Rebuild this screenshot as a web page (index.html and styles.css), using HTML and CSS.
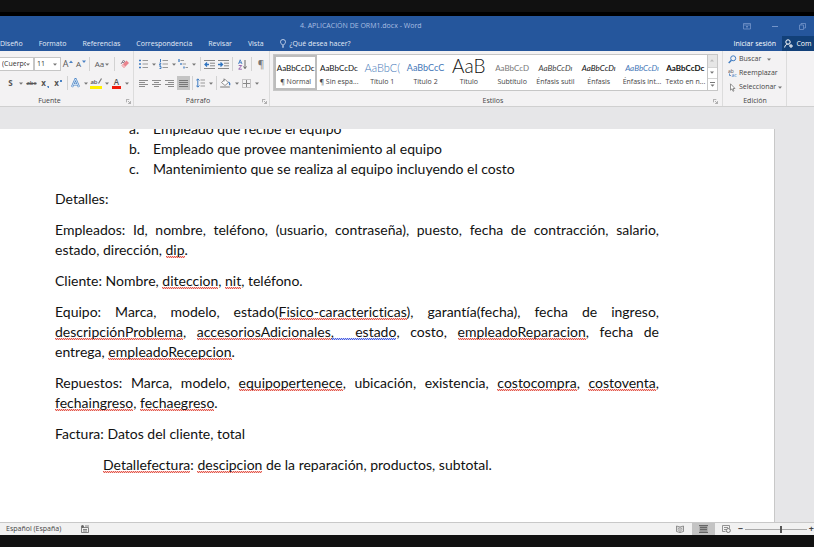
FILE: index.html
```html
<!DOCTYPE html>
<html lang="es">
<head>
<meta charset="utf-8">
<title>4. APLICACIÓN DE ORM1.docx - Word</title>
<link rel="stylesheet" href="styles.css">
</head>
<body>
<svg class="defs" aria-hidden="true">
  <symbol id="chev" viewBox="0 0 4 3"><path d="M0 .5h4L2 2.7z" fill="#777"/></symbol>
  <symbol id="launch" viewBox="0 0 6 6"><path d="M.5 4V.5H4M2.5 2.5l2.5 2.5M5.5 2.5v3h-3" fill="none" stroke="#888" stroke-width=".8"/></symbol>
</svg>
<header class="top">
  <div class="title-row">
    <h1>4. APLICACIÓN DE ORM1.docx - Word</h1>
    <div class="win">
      <button aria-label="Opciones de cinta"><svg width="8" height="7" viewBox="0 0 8 7"><path d="M.5.5h7v5.5h-7zM.5 2h7M4 5.500V3M3 4l1-1 1 1" fill="none" stroke="#7394c9" stroke-width=".8"/></svg></button>
      <button aria-label="Minimizar"><svg width="6" height="7" viewBox="0 0 6 7"><path d="M0 3.500h6" stroke="#7394c9"/></svg></button>
      <button aria-label="Restaurar"><svg width="7" height="7" viewBox="0 0 7 7"><path d="M.5 2h4v4.500h-4zM2 2V.5h4.500V5H5" fill="none" stroke="#7394c9" stroke-width=".8"/></svg></button>
    </div>
  </div>
  <nav class="tabs">
    <a href="#">Diseño</a><a href="#">Formato</a><a href="#">Referencias</a><a href="#">Correspondencia</a><a href="#">Revisar</a><a href="#">Vista</a>
    <a href="#" class="tell"><svg width="6" height="9" viewBox="0 0 6 9"><path d="M2 6C2 5 .5 4.500.5 2.800a2.500 2.300 0 0 1 5 0C5.500 4.500 4 5 4 6zM2 7.200h2M2.300 8.300h1.400" fill="none" stroke="#dbe5f5" stroke-width=".8"/></svg>¿Qué desea hacer?</a>
    <a href="#" class="login">Iniciar sesión</a>
    <button class="share"><svg width="9" height="9" viewBox="0 0 9 9"><circle cx="4" cy="3" r="2.200" fill="none" stroke="#fff"/><path d="M.7 8.500C.8 6.500 2 5.500 3.500 5.300M5 5.500l1 1M7 5v4M5 7h4" fill="none" stroke="#fff"/></svg>Com</button>
  </nav>
</header>
<section class="ribbon">
  <div class="group font">
    <div class="row r1">
      <span class="combo"><select aria-label="Fuente"><option>(Cuerpo)</option></select><svg class="chev"><use href="#chev"/></svg></span>
      <span class="combo"><select aria-label="Tamaño"><option>11</option></select><svg class="chev"><use href="#chev"/></svg></span>
      <button class="glyph big" aria-label="Aumentar tamaño">A<svg width="4" height="9" viewBox="0 0 4 9"><path d="M0 3h4L2 .5z" fill="#4a82c4"/></svg></button>
      <button class="glyph" aria-label="Reducir tamaño">A<svg width="4" height="9" viewBox="0 0 4 9"><path d="M0 .5h4L2 3z" fill="#4a82c4"/></svg></button>
      <i class="sep"></i>
      <button class="glyph">Aa <svg class="chev"><use href="#chev"/></svg></button>
      <i class="sep"></i>
      <button aria-label="Borrar formato"><svg width="10" height="10" viewBox="0 0 10 10"><path d="M1 5 3.500 1l2 3M2 3.500h2" fill="none" stroke="#8d8491"/><path d="M1.500 6.500 6.500 1.500 9 4 4 9z" fill="#e9838d"/><path d="m1.500 6.500 1.500-1.500L5.500 7.500 4 9z" fill="#f3b9be"/></svg></button>
    </div>
    <div class="row r2">
      <button class="glyph"><b>S</b><svg class="chev push"><use href="#chev"/></svg></button>
      <button class="glyph small" aria-label="Tachado"><s>abc</s></button>
      <button class="glyph" aria-label="Subíndice"><b>x</b><svg width="3" height="9"><path d="M0 7h2v2H1z" fill="#4a82c4"/></svg></button>
      <button class="glyph" aria-label="Superíndice"><b>x</b><svg width="3" height="9"><path d="M0 1h2v2H0z" fill="#4a82c4"/></svg></button>
      <i class="sep"></i>
      <button aria-label="Efectos de texto"><svg width="9" height="10" viewBox="0 0 9 10"><path d="M1 9 4.500 1 8 9M2.500 6.500h4" fill="none" stroke="#4f88c8" stroke-width="2.200"/><path d="M1 9 4.500 1 8 9M2.500 6.500h4" fill="none" stroke="#e9f2fb" stroke-width=".8"/></svg><svg class="chev"><use href="#chev"/></svg></button>
      <button class="glyph small" aria-label="Resaltado"><span class="mark">ab<svg width="4" height="6" viewBox="0 0 4 6"><path d="M.5 5.500 3.500.5" stroke="#777" stroke-width="1.200"/></svg></span><svg class="chev"><use href="#chev"/></svg></button>
      <button class="glyph" aria-label="Color de fuente"><span class="red">A</span><svg class="chev"><use href="#chev"/></svg></button>
    </div>
    <div class="label"><span>Fuente</span><svg class="launch"><use href="#launch"/></svg></div>
  </div>
  <div class="group para">
    <div class="row r1">
      <button aria-label="Viñetas"><svg width="9" height="10" viewBox="0 0 9 10"><path d="M0 1.500h2M0 5h2M0 8.500h2" stroke="#3f7cc2" stroke-width="1.600"/><path d="M3.500 1.500H9M3.500 5H9M3.500 8.500H9" stroke="#999"/></svg><svg class="chev"><use href="#chev"/></svg></button>
      <button aria-label="Numeración"><svg width="9" height="10" viewBox="0 0 9 10"><path d="M1.500 0v3M.5 4h1.200v1.200H.5v1h1.500M.5 7.500h1.500v2H.5" fill="none" stroke="#3f7cc2"/><path d="M3.500 1.500H9M3.500 5H9M3.500 8.500H9" stroke="#999"/></svg><svg class="chev"><use href="#chev"/></svg></button>
      <button aria-label="Lista multinivel"><svg width="10" height="10" viewBox="0 0 10 10"><path d="M1 0v3M3 4v2M6 7.500v2" stroke="#3f7cc2" stroke-width="1.300"/><path d="M2.500 1.500H6M4.500 5H8M7.500 8.500H10" stroke="#999"/></svg><svg class="chev"><use href="#chev"/></svg></button>
      <i class="sep"></i>
      <button aria-label="Reducir sangría"><svg width="11" height="9" viewBox="0 0 11 9"><path d="M0 .5h11M6 3.200h5M6 5.800h5M0 8.500h11" stroke="#888"/><path d="M5 4.500H1M3 2.500l-2 2 2 2" fill="none" stroke="#2f74c0" stroke-width="1.300"/></svg></button>
      <button aria-label="Aumentar sangría"><svg width="11" height="9" viewBox="0 0 11 9"><path d="M0 .5h11M6 3.200h5M6 5.800h5M0 8.500h11" stroke="#888"/><path d="M0 4.500h4.500M2.500 2.500l2 2-2 2" fill="none" stroke="#2f74c0" stroke-width="1.300"/></svg></button>
      <i class="sep"></i>
      <button aria-label="Ordenar"><svg width="9" height="11" viewBox="0 0 9 11"><path d="M.5 5 2.200.8 4 5M1 3.700h2.400" fill="none" stroke="#4a82c4" stroke-width=".9"/><path d="M.7 6.500h3l-3 3.700h3.200" fill="none" stroke="#9159a8" stroke-width=".9"/><path d="M7 1v8.500M5.500 7.500 7 9.500l1.500-2" fill="none" stroke="#666"/></svg></button>
      <i class="sep"></i>
      <button class="glyph pil">¶</button>
    </div>
    <div class="row r2">
      <button aria-label="Izquierda"><svg width="10" height="9" viewBox="0 0 10 9"><path d="M0 1.500h9M0 3.500h6M0 5.500h9M0 7.500h6" stroke="#8c8c8c"/></svg></button>
      <button aria-label="Centrar"><svg width="10" height="9" viewBox="0 0 10 9"><path d="M0 1.500h9M2 3.500h5M0 5.500h9M2 7.500h5" stroke="#8c8c8c"/></svg></button>
      <button aria-label="Derecha"><svg width="10" height="9" viewBox="0 0 10 9"><path d="M0 1.500h9M3 3.500h6M0 5.500h9M3 7.500h6" stroke="#8c8c8c"/></svg></button>
      <button class="on" aria-label="Justificar"><svg width="10" height="9" viewBox="0 0 10 9"><path d="M0 1.500h9M0 3.500h9M0 5.500h9M0 7.500h9" stroke="#777"/></svg></button>
      <i class="sep"></i>
      <button aria-label="Interlineado"><svg width="9" height="10" viewBox="0 0 9 10"><path d="M1.800 1v8M.2 2.500 1.800.8l1.600 1.700M.2 7.500l1.600 1.700 1.600-1.700" fill="none" stroke="#3f7cc2"/><path d="M4.500 2H9M4.500 5H9M4.500 8H9" stroke="#999"/></svg><svg class="chev"><use href="#chev"/></svg></button>
      <i class="sep"></i>
      <button aria-label="Sombreado"><svg width="11" height="10" viewBox="0 0 11 10"><path d="M1.500 4.500 5 1.200l3.300 3.500L5 7.500zM4 .5v3" fill="#fff" stroke="#777" stroke-width=".8"/><path d="M8.300 4c1.500.5 1.700 2 1.200 3.200" stroke="#3f7cc2" stroke-width="1.300" fill="none"/><path d="M.5 8.500h9v1h-9z" fill="#fff" stroke="#999" stroke-width=".7"/></svg><svg class="chev"><use href="#chev"/></svg></button>
      <button aria-label="Bordes"><svg width="9" height="9" viewBox="0 0 9 9"><path d="M.5.5h8v8h-8z" fill="none" stroke="#999" stroke-dasharray="1 1"/><path d="M4.500 1v7M1 4.500h7" stroke="#888"/></svg><svg class="chev"><use href="#chev"/></svg></button>
    </div>
    <div class="label"><span>Párrafo</span><svg class="launch"><use href="#launch"/></svg></div>
  </div>
  <div class="group styles">
    <div class="gallery">
      <button class="sel"><span class="pv">AaBbCcDc</span><span>¶ Normal</span></button>
      <button><span class="pv">AaBbCcDc</span><span>¶ Sin espa...</span></button>
      <button><span class="pv h1">AaBbC(</span><span>Título 1</span></button>
      <button><span class="pv h2">AaBbCcC</span><span>Título 2</span></button>
      <button><span class="pv tt">AaB</span><span>Título</span></button>
      <button><span class="pv sub">AaBbCcD</span><span>Subtítulo</span></button>
      <button><span class="pv it soft">AaBbCcDı</span><span>Énfasis sutil</span></button>
      <button><span class="pv it">AaBbCcDı</span><span>Énfasis</span></button>
      <button><span class="pv it blue">AaBbCcDı</span><span>Énfasis int...</span></button>
      <button><span class="pv strong">AaBbCcDc</span><span>Texto en n...</span></button>
      <div class="scroll">
        <button class="off" aria-label="Subir"><svg width="4" height="3"><path d="M0 2.500h4L2 .3z" fill="#bbb"/></svg></button>
        <button aria-label="Bajar"><svg class="chev"><use href="#chev"/></svg></button>
        <button aria-label="Más"><svg width="5" height="6" viewBox="0 0 5 6"><path d="M0 .5h5" stroke="#777"/><path d="M.5 2.500h4l-2 2.300z" fill="#777"/></svg></button>
      </div>
    </div>
    <div class="label"><span>Estilos</span><svg class="launch"><use href="#launch"/></svg></div>
  </div>
  <div class="group edit">
    <button><svg width="9" height="9" viewBox="0 0 9 9"><circle cx="5.200" cy="3.300" r="2.500" fill="none" stroke="#3f7cc2"/><path d="M3.400 5.200.7 8" stroke="#3f7cc2" stroke-width="1.400"/></svg>Buscar<svg class="chev far"><use href="#chev"/></svg></button>
    <button><svg width="9" height="10" viewBox="0 0 9 10"><text x="0" y="4.500" font-size="5" fill="#555">ab</text><text x="3.500" y="9" font-size="5" fill="#3f7cc2">ac</text><path d="M1.500 5.500v2H3" fill="none" stroke="#3f7cc2" stroke-width=".8"/></svg>Reemplazar</button>
    <button><svg width="9" height="9" viewBox="0 0 9 9"><path d="M2.500.8v6.400L4 5.800l1 2.500 1-.5-1-2.300h2z" fill="#fff" stroke="#777" stroke-width=".8"/></svg>Seleccionar<svg class="chev"><use href="#chev"/></svg></button>
    <div class="label"><span>Edición</span></div>
  </div>
</section>
<main class="work">
  <article class="page">
    <ol>
      <li>Empleado que recibe el equipo</li>
      <li>Empleado que provee mantenimiento al equipo</li>
      <li>Mantenimiento que se realiza al equipo incluyendo el costo</li>
    </ol>
    <p>Detalles:</p>
    <p>Empleados: Id, nombre, teléfono, (usuario, contraseña), puesto, fecha de contracción, salario, estado, dirección, <u>dip</u>.</p>
    <p>Cliente: Nombre, <u>diteccion</u>, <u>nit</u>, teléfono.</p>
    <p>Equipo: Marca, modelo, estado(<u>Fisico-caractericticas</u>), garantía(fecha), fecha de ingreso, <u>descripciónProblema</u>, <u>accesoriosAdicionales</u><u class="gram">, &nbsp;estado</u>, costo, <u>empleadoReparacion</u>, fecha de entrega, <u>empleadoRecepcion</u>.</p>
    <p>Repuestos: Marca, modelo, <u>equipopertenece</u>, ubicación, existencia, <u>costocompra</u>, <u>costoventa</u>, <u>fechaingreso</u>, <u>fechaegreso</u>.</p>
    <p>Factura: Datos del cliente, total</p>
    <p class="indent"><u>Detallefectura</u>: <u>descipcion</u> de la reparación, productos, subtotal.</p>
  </article>
</main>
<footer class="status">
  <span class="lang">Español (España)</span>
  <svg width="8" height="8" viewBox="0 0 8 8"><path d="M.5 2.500h7v5h-7zM2 4.500h4M2 6h4M4 1h4" fill="none" stroke="#777" stroke-width=".9"/><circle cx="1.500" cy="1.500" r="1.500" fill="#666"/></svg>
  <div class="views">
    <button aria-label="Modo lectura"><svg width="8" height="8" viewBox="0 0 8 8"><path d="M.5 1 4 2l3.500-1v5.500L4 7.500.5 6.500zM4 2v5.500M1.500 3l1.500.4M1.500 4.800l1.500.4M5 3.400 6.500 3M5 5.200l1.500-.4" fill="none" stroke="#777" stroke-width=".8"/></svg></button>
    <button class="on" aria-label="Diseño de impresión"><svg width="9" height="8" viewBox="0 0 9 8"><path d="M.5.5h8v7h-8z" fill="#999"/><path d="M0 .5h9M1 2.500h7M1 4.500h7M0 7.500h9" stroke="#666"/></svg></button>
    <button aria-label="Diseño web"><svg width="9" height="8" viewBox="0 0 9 8"><path d="M.5.500h7v3M.5.5v6h3M2 2.500h4M2 4.500h2" fill="none" stroke="#888" stroke-width=".9"/><circle cx="6.300" cy="5.500" r="2" fill="none" stroke="#777"/></svg></button>
  </div>
  <label class="zoom"><span>−</span><input type="range" min="0" max="100" value="59" aria-label="Zoom"><span>+</span></label>
</footer>
</body>
</html>
```
FILE: styles.css
```css
* { box-sizing: border-box; }
body {
  margin: 0;
  height: 100vh;
  padding: 16px 0 12px;
  display: flex;
  flex-direction: column;
  overflow: hidden;
  background: #111;
  font: 7px/10px "Open Sans", "Noto Sans", sans-serif;
  color: #444;
}
button {
  padding: 0;
  border: 0;
  background: none;
  font: inherit;
  color: inherit;
  display: flex;
  align-items: center;
  justify-content: center;
  gap: 4px;
  white-space: nowrap;
}
svg { flex: none; }
.defs { position: absolute; width: 0; height: 0; }
.chev { width: 4px; height: 3px; }

.top { background: #25569c; color: #e3ebf7; box-shadow: 0 -4px #000; }
.title-row { display: flex; justify-content: space-between; height: 20px; align-items: center; padding-left: 300px; }
h1 { margin: 0; font-size: 7px; font-weight: 400; color: #a9bfe2; }
.win { display: flex; gap: 21px; padding-right: 8px; }
.tabs { display: flex; gap: 16px; height: 15px; align-items: center; white-space: nowrap; }
.tabs a { color: inherit; text-decoration: none; }
.tabs .tell { display: flex; align-items: center; gap: 4px; }
.tabs .login { margin-left: auto; color: #fff; }
.share { align-self: stretch; width: 32px; margin-left: -10px; background: #124078; color: #fff; gap: 3px; }

.ribbon { display: flex; height: 56px; background: #f3f2f3; border-bottom: 1px solid #d0d0d0; }
.group { display: flex; flex-direction: column; border-right: 1px solid #dcdcdc; padding-top: 6px; }
.row { display: grid; height: 19px; align-items: start; }
.row > * { height: 14px; }
.font { width: 134px; }
.para { width: 136px; }
.font .r1 { grid-template-columns: 34px 27px 14px 12px 5px 20px 5px 15px; }
.font .r2 { grid-template-columns: 17px 15px 13px 13px 5px 19px 21px 21px; padding-left: 7px; }
.para .r1 { grid-template-columns: 20px 20px 20px 6px 13px 14px 5px 14px 5px 14px; padding-left: 3px; }
.para .r2 { grid-template-columns: 13px 13px 14px 13px 5px 19px 5px 21px 20px; padding-left: 3px; }
.sep { justify-self: center; width: 1px; background: #d2d2d2; }
.combo { display: flex; align-items: center; background: #fff; border: 1px solid #c6c6c6; padding-right: 3px; }
.combo:first-child { border-left: 0; }
.combo select { flex: 1; min-width: 0; width: 0; height: 12px; border: 0; padding: 0 0 0 2px; appearance: none; background: none; font: inherit; color: #333; }
.glyph { font-size: 8px; gap: 1px; color: #555; }
.glyph.big { font-size: 9px; }
.glyph.small { font-size: 6px; gap: 3px; font-weight: 600; }
.glyph.pil { font-size: 10px; color: #777; }
.push { margin-left: 5px; }
.mark { display: flex; line-height: 8px; border-bottom: 3px solid #fff000; }
.red { line-height: 8px; padding: 0 2px; margin-right: 3px; border-bottom: 3px solid #f01c0c; font-weight: 600; }
.on { background: #c4c4c4; }
.label { display: flex; align-items: center; height: 10px; margin-top: auto; margin-bottom: 0; }
.label span { flex: 1; text-align: center; }
.launch { width: 5px; height: 5px; margin-right: 2px; }
.font .label span { padding-right: 27px; }

.styles { flex: 1; min-width: 0; padding: 3px 4px 0 3px; }
.styles .launch { margin-right: 0; }
.gallery { display: grid; grid-template-columns: repeat(10, minmax(0, 1fr)) 10px; height: 37px; background: #fff; border: 1px solid #c6c6c6; }
.gallery > button { flex-direction: column; justify-content: flex-start; gap: 0; padding-top: 4px; overflow: hidden; }
.gallery > .sel { padding-top: 2px; border: 2px solid #bdbdbd; }
.pv { display: flex; align-items: center; height: 18px; font-size: 8px; color: #111; font-family: Lato, sans-serif; }
.pv.h1 { font-size: 11px; color: #4377b8; font-weight: 300; }
.pv.h2 { font-size: 9px; color: #4377b8; }
.pv.tt { font-size: 19px; font-weight: 300; padding-bottom: 4px; }
.pv.sub { color: #777; font-size: 8px; }
.pv.it { font-style: italic; }
.pv.soft { color: #444; }
.pv.blue { color: #4377b8; }
.pv.strong { font-weight: 700; }
.scroll { display: grid; grid-template-rows: repeat(3, 1fr); border-left: 1px solid #c6c6c6; }
.scroll button + button { border-top: 1px solid #d4d4d4; }
.scroll .off { background: #e6e6e6; }

.edit { width: 64px; margin-right: 27px; padding: 1px 0 0 5px; }
.edit > button { justify-content: flex-start; height: 14px; gap: 2px; }
.edit .far { margin-left: 4px; }
.edit .label { padding-right: 4px; }

.work { flex: 1; min-height: 0; padding: 22px 39px 0 0; background: #e6e6e8; }
.page {
  height: 100%;
  overflow: hidden;
  padding: 0 115px 0 55px;
  background: #fff;
  border-right: 1px solid #c8c8c8;
  color: #111;
  font: 14px/20px Lato, "Liberation Sans", sans-serif;
  font-variant-ligatures: none;
}
.page ol { list-style: none; counter-reset: item; margin: -10px 0 10px; padding-left: 74px; }
.page li { display: flex; counter-increment: item; }
.page li::before { content: counter(item, lower-alpha) "."; width: 24px; }
.page p { margin: 0 0 11px; text-align: justify; }
.page .indent { padding-left: 48px; }
.page u {
  text-decoration: none;
  background-image:
    repeating-linear-gradient(90deg, #e2574c 0 1px, #f8c9c4 1px 2px),
    repeating-linear-gradient(90deg, #f8c9c4 0 1px, #e2574c 1px 2px);
  background-size: 100% 1px;
  background-repeat: no-repeat;
  background-position: 0 calc(100% - 1px), 0 100%;
}
.page .gram {
  background-image:
    repeating-linear-gradient(90deg, #4a5fe0 0 1px, #c4cbf8 1px 2px),
    repeating-linear-gradient(90deg, #c4cbf8 0 1px, #4a5fe0 1px 2px);
}

.status { display: flex; align-items: center; height: 13px; padding-left: 6px; background: #f1f1f1; border-top: 1px solid #c8c8c8; }
.lang { margin-right: 20px; white-space: nowrap; }
.views { display: flex; align-self: stretch; margin-left: auto; }
.views button { width: 23px; }
.zoom { display: flex; align-items: center; gap: 2px; font-size: 9px; font-weight: 700; }
.zoom input { appearance: none; width: 62px; height: 8px; margin: 0; background: linear-gradient(#aaa, #aaa) center / 100% 1px no-repeat; }
.zoom input::-webkit-slider-thumb { appearance: none; width: 2px; height: 7px; background: #555; }
```
